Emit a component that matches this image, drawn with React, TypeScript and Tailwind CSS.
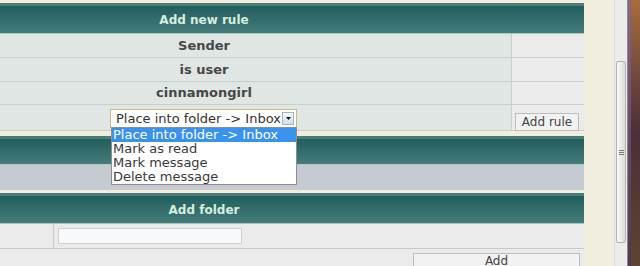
import React from 'react';

const options = ['Place into folder -> Inbox', 'Mark as read', 'Mark message', 'Delete message'];

const Header: React.FC<{ title?: string; className?: string }> = ({ title, className = '' }) => (
  <div
    className={`flex items-center border-t-[3px] border-[#4b7b78] border-b border-b-[#a9c6c1] bg-gradient-to-b from-[#215e5e] to-[#447c7a] ${className}`}
  >
    <span className="w-[408px] text-center text-[12px] font-bold text-[#d6eedb]">{title}</span>
  </div>
);

const RuleRow: React.FC<{ label: string; h?: string }> = ({ label, h = 'h-[24px]' }) => (
  <div className={`flex ${h} border-b border-[#c6cfca]`}>
    <div className="w-[512px] flex items-center bg-[#dfe6e3] border-r border-[#c6cfca]">
      <span className="w-[408px] text-center text-[13px] font-bold text-[#474747]">{label}</span>
    </div>
    <div className="flex-1 bg-[#ebebeb]" />
  </div>
);

export default function App() {
  return (
    <div className="w-[640px] h-[266px] overflow-hidden flex font-['DejaVu_Sans',sans-serif]">
      <div className="w-[614px] bg-[#f1eedf] pt-[3px]">
        <div className="w-[584px]">
          {/* Add new rule */}
          <Header title="Add new rule" className="h-[31px]" />
          <RuleRow label="Sender" />
          <RuleRow label="is user" />
          <RuleRow label="cinnamongirl" h="h-[23px]" />
          <div className="flex h-[26px] border-b border-[#c6cfca]">
            <div className="w-[512px] flex items-start pt-[4px] bg-[#dfe6e3] border-r border-[#c6cfca]">
              <div className="relative ml-[110px] w-[187px] h-[19px] border border-[#cdb87e] bg-white flex items-center">
                <span className="pl-[5px] text-[13px] leading-none text-[#333] whitespace-nowrap">
                  Place into folder -&gt; Inbox
                </span>
                <span className="absolute right-[2px] top-[2px] w-[12px] h-[13px] border border-[#9fb2c6] bg-gradient-to-b from-[#f4f8fc] to-[#cfdded] flex items-center justify-center">
                  <svg width="5" height="3" viewBox="0 0 5 3">
                    <path d="M0 0h5L2.5 3z" fill="#111" />
                  </svg>
                </span>
                {/* open dropdown list */}
                <div className="absolute left-[0px] top-[17px] w-[186px] h-[58px] border border-[#8e8e8e] bg-white z-10">
                  {options.map((o, i) => (
                    <div
                      key={o}
                      className={`h-[14px] pl-[1px] text-[13px] leading-[14px] whitespace-nowrap ${
                        i === 0 ? 'bg-[#3a92f0] text-white' : 'text-[#3a3a3a]'
                      }`}
                    >
                      {o}
                    </div>
                  ))}
                </div>
              </div>
            </div>
            <div className="flex-1 bg-[#ebebeb] pt-[4px] pl-[3px]">
              <button className="w-[64px] h-[18px] border border-[#bdbdbd] bg-[#f2f2f2] text-[12px] leading-none text-[#444]">
                Add rule
              </button>
            </div>
          </div>

          {/* Rules list */}
          <Header className="h-[29px] mt-[5px]" />
          <div className="h-[25px] bg-[#c5cbd1]" />

          {/* Add folder */}
          <Header title="Add folder" className="h-[31px] mt-[3px]" />
          <div className="flex h-[25px] border-b border-[#c8c8c8] bg-[#ebebeb]">
            <div className="w-[54px] border-r border-[#c8c8c8]" />
            <div className="pl-[4px] pt-[4px]">
              <div className="w-[184px] h-[16px] border border-[#d0d0d0] bg-[#f8f9fa]" />
            </div>
          </div>
          <div className="flex h-[20px] bg-[#ebebeb]">
            <div className="w-[413px]" />
            <div className="pt-[4px]">
              <button className="w-[167px] h-[16px] border border-[#bdbdbd] border-b-0 bg-[#f2f2f2] pt-[1px] text-[12px] leading-[13px] text-[#444] flex justify-center">
                Add
              </button>
            </div>
          </div>
        </div>
      </div>

      {/* scrollbar */}
      <div className="w-[13px] h-full bg-[#ececec] border-l border-[#dedede] pt-[61px] pl-[1px]">
        <div className="w-[10px] h-[182px] border border-[#b4b4b4] rounded-[2px] bg-gradient-to-r from-[#fafafa] to-[#dcdcdc] flex items-center justify-center">
          <svg width="5" height="7" viewBox="0 0 5 7">
            <path d="M0 1.5h5M0 3.5h5M0 5.5h5" stroke="#777" strokeWidth="1" />
          </svg>
        </div>
      </div>

      {/* desktop behind the window */}
      <div className="w-[1px] h-full bg-[#8a8a8a]" />
      <div className="w-[3px] h-full bg-gradient-to-b from-[#8a6687] via-[#6a4a68] to-[#4e3a4c]" />
      <div className="flex-1 h-full bg-gradient-to-b from-[#a86d3a] via-[#4a3038] to-[#5c4432]" />
    </div>
  );
}
